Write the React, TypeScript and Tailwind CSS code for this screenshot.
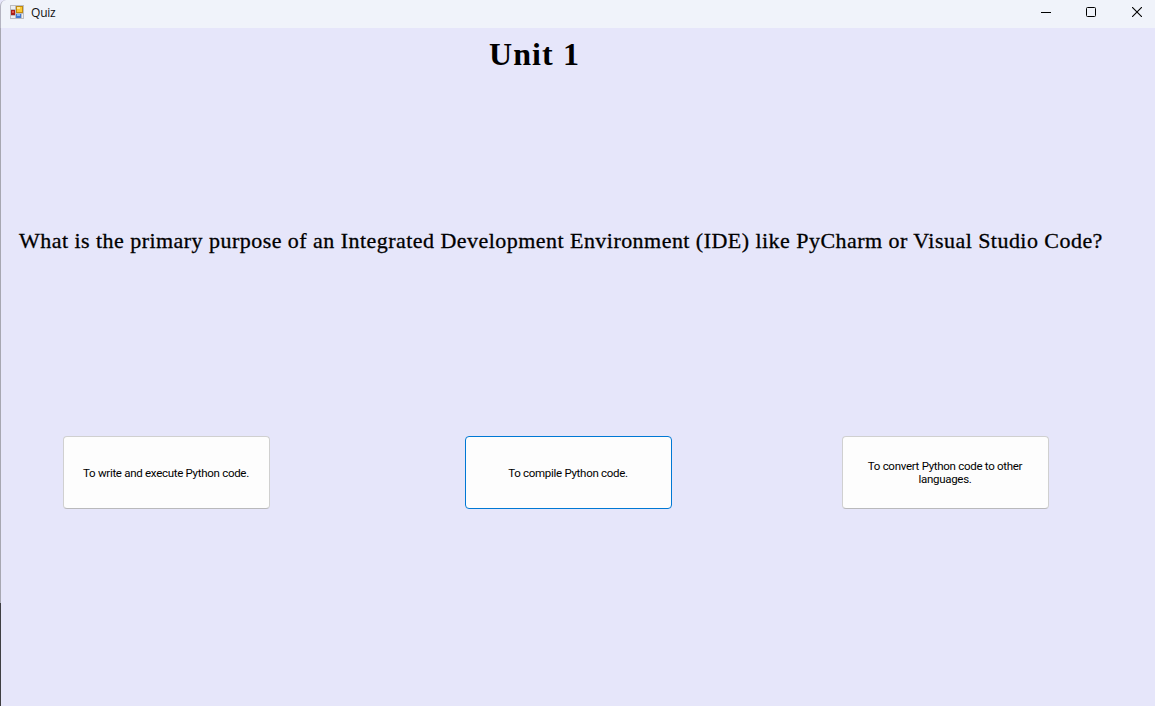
import React from "react";

function AppIcon() {
  return (
    <svg width="14" height="14" viewBox="0 0 14 14" shapeRendering="crispEdges">
      <rect width="14" height="14" fill="#bcbdc2" />
      <rect x="1" y="1" width="4" height="3" fill="#eceef4" />
      <rect x="1" y="11" width="4" height="2" fill="#eceef4" />
      <rect x="12" y="9" width="1" height="4" fill="#eceef4" />
      <rect x="1" y="5" width="4" height="5" fill="#a8201a" />
      <rect x="2" y="6" width="2" height="2" fill="#e2584c" />
      <rect x="6" y="1" width="7" height="7" fill="#c08a10" />
      <rect x="7" y="2" width="5" height="5" fill="#fbc936" />
      <rect x="7" y="2" width="3" height="2" fill="#ffe695" />
      <rect x="6" y="9" width="5" height="4" fill="#3f78d0" />
      <rect x="7" y="9" width="3" height="2" fill="#8db8f5" />
    </svg>
  );
}

function TitleBar() {
  return (
    <header className="flex h-7 shrink-0 items-start rounded-tl-[6px] border-l border-[#b4b4c0] bg-[#f0f3fa]">
      <div className="flex h-6 flex-1 items-center pl-[9px]">
        <AppIcon />
        <span className="ml-[7px] mt-px font-['Open_Sans','Noto_Sans',sans-serif] text-[12px] leading-[16px] tracking-[-0.2px] text-[#111]">Quiz</span>
      </div>
      <div className="flex h-6 items-center">
        <button aria-label="Minimize" className="flex h-full w-[46px] items-center justify-center">
          <svg width="10" height="10" viewBox="0 0 10 10"><path d="M0 5.5H10" stroke="#000" /></svg>
        </button>
        <button aria-label="Maximize" className="flex h-full w-[44px] items-center justify-center">
          <svg width="10" height="10" viewBox="0 0 10 10"><rect x="0.5" y="0.5" width="9" height="9" rx="1" fill="none" stroke="#000" /></svg>
        </button>
        <button aria-label="Close" className="mr-[-6px] flex h-full w-[48px] items-center justify-center">
          <svg width="10" height="10" viewBox="0 0 10 10"><path d="M0 0L10 10M10 0L0 10" stroke="#000" strokeWidth="1.1" /></svg>
        </button>
      </div>
    </header>
  );
}

function Answer({ children, className }: { children: React.ReactNode; className: string }) {
  return (
    <button
      className={"flex h-[73px] w-[207px] shrink-0 items-center justify-center rounded-[4px] border bg-[#fdfdfd] pr-px text-center font-['Roboto','Liberation_Sans',sans-serif] text-[11.5px] leading-[13px] tracking-[-0.29px] text-black " + className}
    >
      <span>{children}</span>
    </button>
  );
}

export default function App() {
  return (
    <div className="flex h-[706px] w-[1155px] flex-col overflow-hidden bg-[#e6e6fa]">
      <TitleBar />
      <div className="flex min-h-0 flex-1">
        <div className="flex w-px shrink-0 flex-col bg-[#a7a7b1]">
          <div className="mt-[575px] flex-1 bg-[#3f3f42]" />
        </div>
        <main className="flex flex-1 flex-col font-['Liberation_Serif',serif] text-black">
          <h1 className="ml-[488px] mt-[7px] h-[38px] whitespace-nowrap text-[32px] font-bold leading-[38px] tracking-[1.1px]">Unit 1</h1>
          <p className="ml-[18px] mt-[154px] h-[28px] whitespace-nowrap text-[22px] leading-[28px] tracking-[0.46px] [-webkit-text-stroke:0.3px_black]">
            What is the primary purpose of an Integrated Development Environment (IDE) like PyCharm or Visual Studio Code?
          </p>
          <div className="mt-[181px] flex pl-[62px]">
            <Answer className="border-[#d0d0d0] border-b-[#b9b9bb] pt-0.5">To write and execute Python code.</Answer>
            <Answer className="ml-[195px] border-[#0078d4] pt-0.5">To compile Python code.</Answer>
            <Answer className="ml-[170px] border-[#d0d0d0] border-b-[#b9b9bb]">To convert Python code to other<br />languages.</Answer>
          </div>
        </main>
      </div>
    </div>
  );
}
